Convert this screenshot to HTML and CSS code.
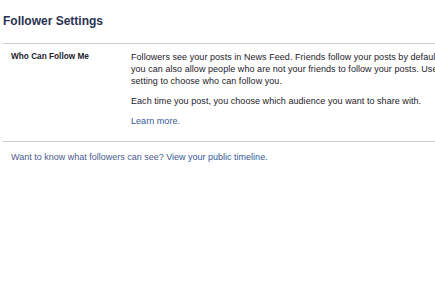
FILE: index.html
```html
<!DOCTYPE html>
<html lang="en">
<head>
    <meta charset="UTF-8">
    <title>Follower Settings</title>
    <link rel="stylesheet" href="styles.css">
</head>
<body>
    <div class="settings">
        <h2 class="settings-title">Follower Settings</h2>

        <div class="setting-row">
            <div class="setting-label">Who Can Follow Me</div>
            <div class="setting-content">
                <p>Followers see your posts in News Feed. Friends follow your posts by default, but you can also allow people who are not your friends to follow your posts. Use this setting to choose who can follow you.</p>
                <p>Each time you post, you choose which audience you want to share with.</p>
                <p><a href="#" class="link">Learn more.</a></p>
            </div>
        </div>

        <p class="settings-footer">Want to know what followers can see? <a href="#" class="link">View your public timeline.</a></p>
    </div>
</body>
</html>
```

FILE: styles.css
```css
/* General Styles */
html, body {
    overflow: hidden;
}

body {
    margin: 0;
    padding: 0;
    font-family: "Liberation Sans", Arial, sans-serif;
    font-size: 9px;
    line-height: 12px;
    color: #1d2129;
    background-color: #ffffff;
}

.settings {
    width: 560px;
    padding: 13px 0 0 3px;
}

.settings-title {
    margin: 0;
    padding-bottom: 14px;
    font-size: 12px;
    line-height: 16px;
    font-weight: bold;
    color: #283350;
    border-bottom: 1px solid #cccccc;
}

/* Setting row */
.setting-row {
    display: flex;
    padding: 7px 0 14px 8px;
    border-bottom: 1px solid #cccccc;
}

.setting-label {
    flex: 0 0 120px;
    font-weight: bold;
    font-size: 8.25px;
}

.setting-content {
    width: 330px;
    letter-spacing: 0.05px;
}

.setting-content p {
    margin: 0 0 8px 0;
}

.setting-content p:last-child {
    margin-bottom: 0;
}

.link {
    color: #365899;
    text-decoration: none;
}

.settings-footer {
    margin: 0;
    padding: 9px 0 0 8px;
    color: #4a5b8c;
}
```
